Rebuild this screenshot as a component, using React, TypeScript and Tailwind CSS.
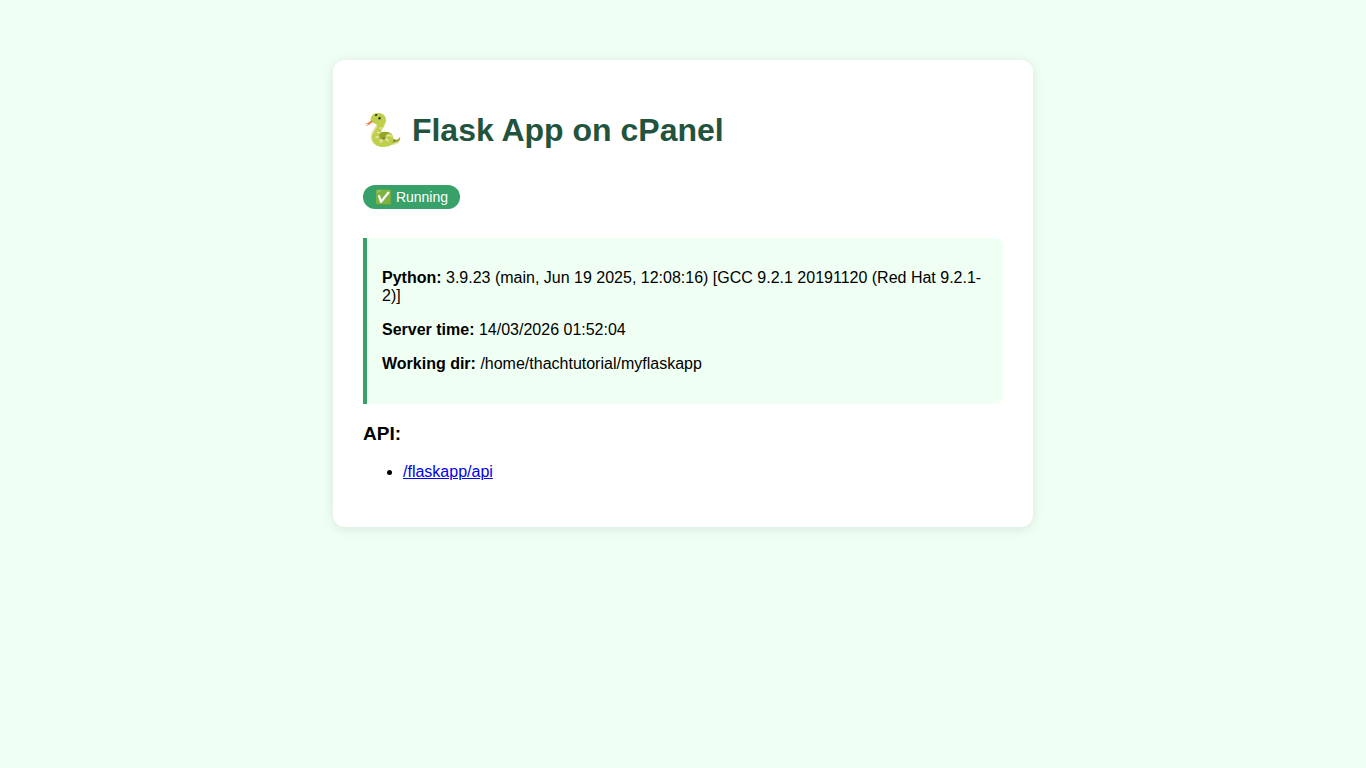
const details = [
  { label: "Python:", value: "3.9.23 (main, Jun 19 2025, 12:08:16) [GCC 9.2.1 20191120 (Red Hat 9.2.1-2)]" },
  { label: "Server time:", value: "14/03/2026 01:52:04" },
  { label: "Working dir:", value: "/home/thachtutorial/myflaskapp" },
];

export default function App() {
  return (
    <div className="min-h-screen bg-[#f0fff4] px-5 py-[60px] font-['Liberation_Sans',Arial,sans-serif] text-base leading-[18px] text-black">
      <main className="mx-auto max-w-[700px] rounded-xl bg-white px-[30px] pt-[52px] pb-[46px] shadow-[0_2px_12px_rgba(0,0,0,0.1)]">
        <h1 className="text-[32px] leading-9 font-bold text-[#22543d]">🐍 Flask App on cPanel</h1>
        <div className="mt-[37px] flex">
          <span className="rounded-[20px] bg-[#38a169] px-3 py-1 text-sm leading-4 text-white">✅ Running</span>
        </div>
        <section className="mt-[29px] flex flex-col gap-4 rounded-r-lg border-l-4 border-[#38a169] bg-[#f0fff4] px-[15px] py-[31px]">
          {details.map(({ label, value }) => (
            <p key={label}>
              <strong>{label}</strong> {value}
            </p>
          ))}
        </section>
        <h3 className="mt-[19px] text-[19px] leading-[22px] font-bold">API:</h3>
        <ul className="mt-[18px] list-disc pl-10">
          <li>
            <a href="/flaskapp/api" className="text-[#0000ee] underline">/flaskapp/api</a>
          </li>
        </ul>
      </main>
    </div>
  );
}
